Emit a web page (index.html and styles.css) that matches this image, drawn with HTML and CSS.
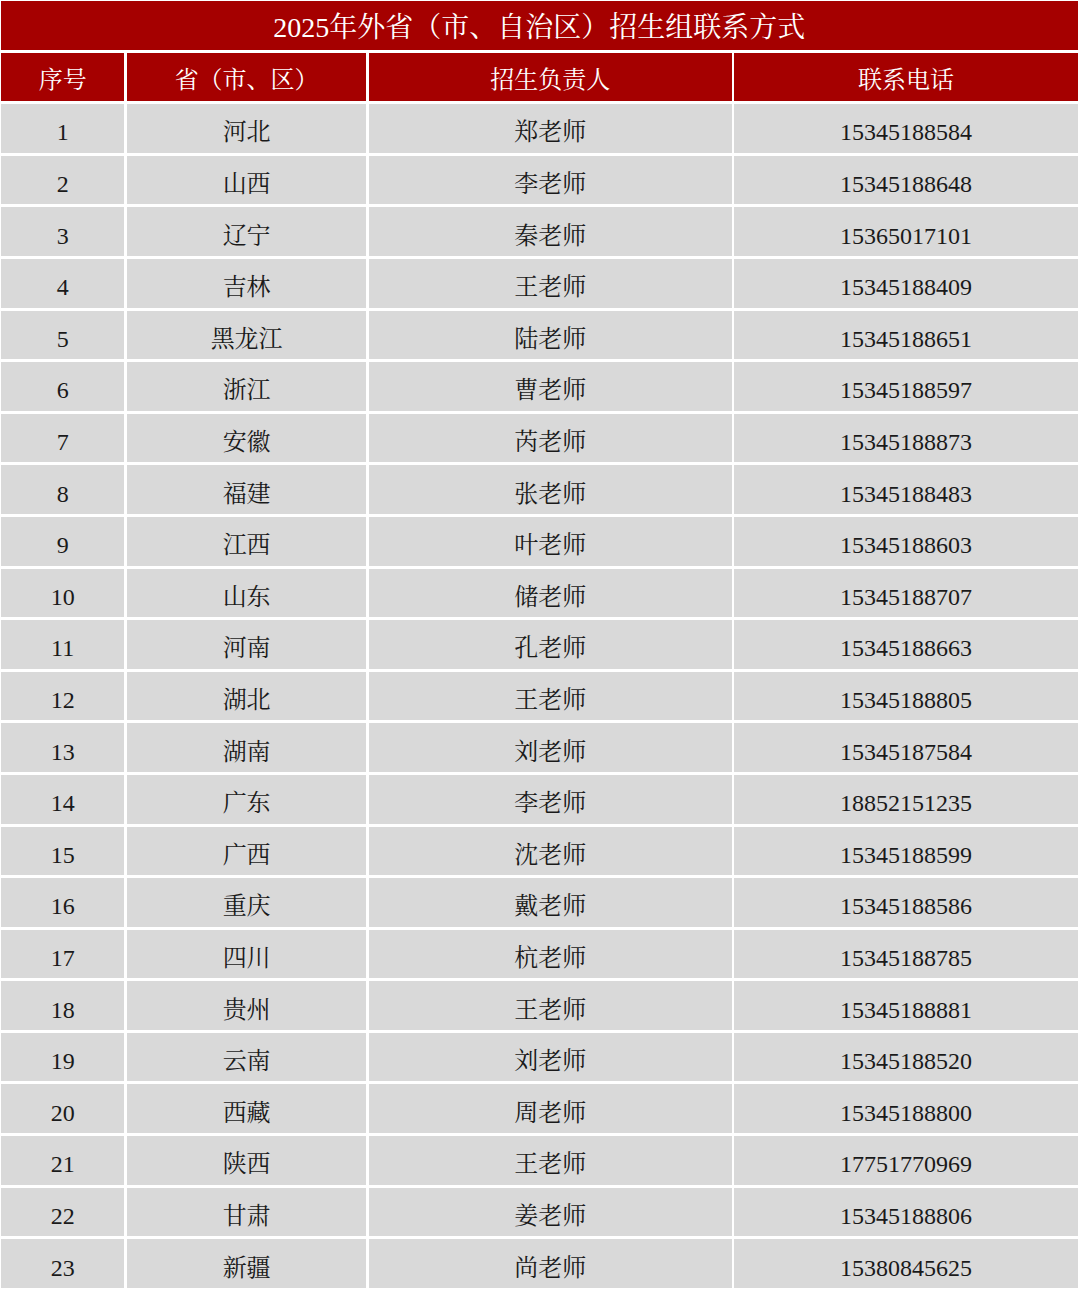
FILE: index.html
```html
<!DOCTYPE html>
<html lang="zh-CN">
<head>
<meta charset="utf-8">
<title>2025年外省（市、自治区）招生组联系方式</title>
<link rel="stylesheet" href="styles.css">
</head>
<body>
<div class="sheet">
  <div class="cell title">2025年外省（市、自治区）招生组联系方式</div>
  <div class="cell head">序号</div>
  <div class="cell head">省（市、区）</div>
  <div class="cell head">招生负责人</div>
  <div class="cell head">联系电话</div>

  <div class="cell">1</div><div class="cell">河北</div><div class="cell">郑老师</div><div class="cell">15345188584</div>
  <div class="cell">2</div><div class="cell">山西</div><div class="cell">李老师</div><div class="cell">15345188648</div>
  <div class="cell">3</div><div class="cell">辽宁</div><div class="cell">秦老师</div><div class="cell">15365017101</div>
  <div class="cell">4</div><div class="cell">吉林</div><div class="cell">王老师</div><div class="cell">15345188409</div>
  <div class="cell">5</div><div class="cell">黑龙江</div><div class="cell">陆老师</div><div class="cell">15345188651</div>
  <div class="cell">6</div><div class="cell">浙江</div><div class="cell">曹老师</div><div class="cell">15345188597</div>
  <div class="cell">7</div><div class="cell">安徽</div><div class="cell">芮老师</div><div class="cell">15345188873</div>
  <div class="cell">8</div><div class="cell">福建</div><div class="cell">张老师</div><div class="cell">15345188483</div>
  <div class="cell">9</div><div class="cell">江西</div><div class="cell">叶老师</div><div class="cell">15345188603</div>
  <div class="cell">10</div><div class="cell">山东</div><div class="cell">储老师</div><div class="cell">15345188707</div>
  <div class="cell">11</div><div class="cell">河南</div><div class="cell">孔老师</div><div class="cell">15345188663</div>
  <div class="cell">12</div><div class="cell">湖北</div><div class="cell">王老师</div><div class="cell">15345188805</div>
  <div class="cell">13</div><div class="cell">湖南</div><div class="cell">刘老师</div><div class="cell">15345187584</div>
  <div class="cell">14</div><div class="cell">广东</div><div class="cell">李老师</div><div class="cell">18852151235</div>
  <div class="cell">15</div><div class="cell">广西</div><div class="cell">沈老师</div><div class="cell">15345188599</div>
  <div class="cell">16</div><div class="cell">重庆</div><div class="cell">戴老师</div><div class="cell">15345188586</div>
  <div class="cell">17</div><div class="cell">四川</div><div class="cell">杭老师</div><div class="cell">15345188785</div>
  <div class="cell">18</div><div class="cell">贵州</div><div class="cell">王老师</div><div class="cell">15345188881</div>
  <div class="cell">19</div><div class="cell">云南</div><div class="cell">刘老师</div><div class="cell">15345188520</div>
  <div class="cell">20</div><div class="cell">西藏</div><div class="cell">周老师</div><div class="cell">15345188800</div>
  <div class="cell">21</div><div class="cell">陕西</div><div class="cell">王老师</div><div class="cell">17751770969</div>
  <div class="cell">22</div><div class="cell">甘肃</div><div class="cell">姜老师</div><div class="cell">15345188806</div>
  <div class="cell">23</div><div class="cell">新疆</div><div class="cell">尚老师</div><div class="cell">15380845625</div>
</div>
</body>
</html>
```

FILE: styles.css
```css
html, body {
  margin: 0;
  padding: 0;
  background: #ffffff;
}

body {
  font-family: "Liberation Serif", "Noto Serif CJK SC", "Noto Sans CJK SC", serif;
  color: #1a1a1a;
}

.sheet {
  display: grid;
  grid-template-columns: 123.3px 239.3px 362.7px 343.4px;
  grid-auto-rows: 48.6px;
  column-gap: 2.7px;
  row-gap: 3px;
  padding: 1px 2px 2px 1px;
  width: 1080px;
  box-sizing: border-box;
}

.cell {
  background: #d9d9d9;
  display: flex;
  align-items: center;
  justify-content: center;
  font-size: 24px;
  line-height: 1;
  padding-top: 8px;
  box-sizing: border-box;
}

.head {
  background: #a50000;
  color: #ffffff;
  font-size: 24px;
  padding-top: 7px;
}

.title {
  grid-column: 1 / -1;
  background: #a50000;
  color: #ffffff;
  font-size: 28px;
  padding-top: 6px;
}
```
